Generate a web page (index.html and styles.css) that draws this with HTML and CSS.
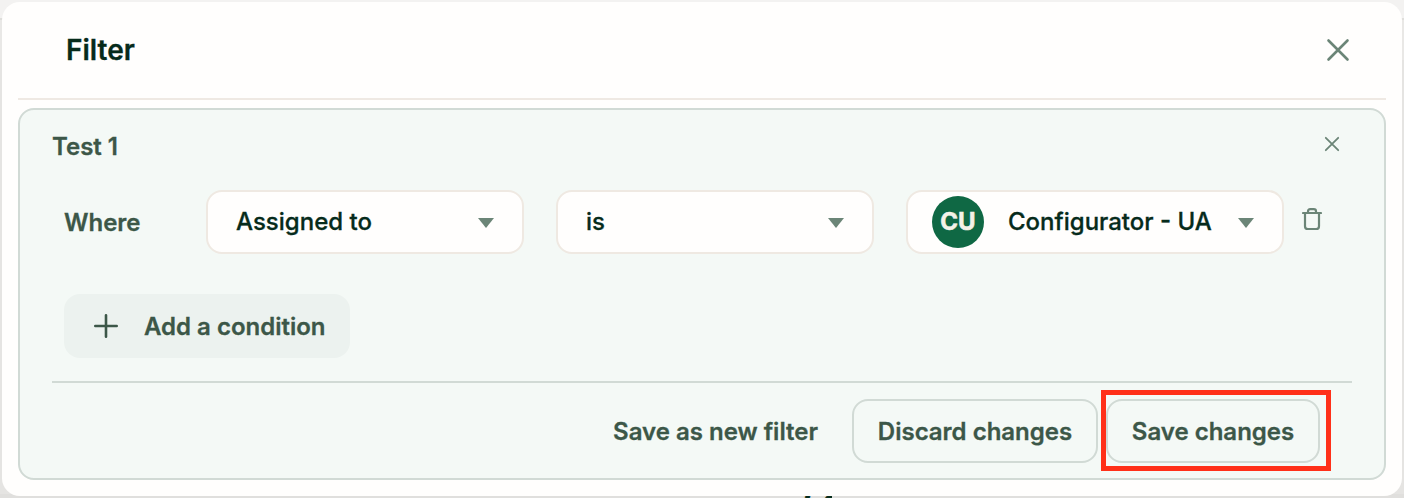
FILE: index.html
```
<!DOCTYPE html>
<html lang="en">
<head>
<meta charset="utf-8">
<title>Filter</title>
<link rel="stylesheet" href="styles.css">
</head>
<body>
<div class="backdrop-heading" aria-hidden="true"><span>l</span><span>f</span></div>
<main class="dialog">
  <header class="dialog-header">
    <h1 class="dialog-title">Filter</h1>
    <svg class="dialog-close" viewBox="0 0 24 24"><path d="M2.5 2.5 21.5 21.5M21.5 2.5 2.5 21.5"/></svg>
  </header>
  <section class="panel">
    <div class="panel-header">
      <h2 class="panel-title">Test 1</h2>
      <svg class="panel-close" viewBox="0 0 16 16"><path d="M1.8 1.8 14.2 14.2M14.2 1.8 1.8 14.2"/></svg>
    </div>
    <div class="condition">
      <span class="where">Where</span>
      <div class="select"><span class="value">Assigned to</span><svg class="caret" viewBox="0 0 16 10"><path d="M0 0H16L8 10Z"/></svg></div>
      <div class="select"><span class="value">is</span><svg class="caret" viewBox="0 0 16 10"><path d="M0 0H16L8 10Z"/></svg></div>
      <div class="select select-user"><span class="avatar">CU</span><span class="value user">Configurator - UA</span><svg class="caret" viewBox="0 0 16 10"><path d="M0 0H16L8 10Z"/></svg></div>
      <svg class="trash" viewBox="0 0 20 24"><path d="M1 6H19M3 6V19.2Q3 22 5.8 22H14.2Q17 22 17 19.2V6M6 6V4.4Q6 2.2 8.2 2.2H11.8Q14 2.2 14 4.4V6"/></svg>
    </div>
    <div class="add">
      <svg class="plus" viewBox="0 0 24 24"><path d="M12 1.3V22.7M1.3 12H22.7"/></svg>
      <span class="label">Add a condition</span>
    </div>
    <footer class="actions">
      <span class="button plain"><span class="label">Save as new filter</span></span>
      <span class="button outlined discard"><span class="label">Discard changes</span></span>
      <span class="button outlined save"><span class="label">Save changes</span><i class="highlight"></i></span>
    </footer>
  </section>
</main>
</body>
</html>
```
FILE: styles.css
```
* { box-sizing: border-box; }
body {
  margin: 0;
  width: 1404px;
  height: 498px;
  padding: 2px;
  overflow: hidden;
  position: relative;
  background: linear-gradient(#f3f2f1 0 18px, #dfdedb 18px 20px, #e9e8e6 20px 60px, #e5e4e2 60px 494px, #e0dfdd 494px);
  font-family: Inter, "Liberation Sans", sans-serif;
  font-size: 24px;
  font-weight: 600;
  color: #3c5748;
  -webkit-text-stroke: 0.3px currentColor;
}
.backdrop-heading {
  position: absolute;
  left: 801px;
  top: 489px;
  display: flex;
  gap: 9px;
  height: 9px;
  overflow: hidden;
  font-size: 32px;
  line-height: 40px;
  font-style: italic;
  font-weight: 700;
  color: #062b1b;
}
.dialog {
  position: relative;
  height: 494px;
  padding: 0 16px;
  border-radius: 18px;
  background: #fffefd;
}
.dialog-header {
  display: flex;
  align-items: center;
  justify-content: space-between;
  height: 98px;
  padding: 0 36px 0 48px;
  border-bottom: 2px solid #efe9e3;
}
h1, h2 { margin: 0; font-weight: 600; }
.dialog-title { font-size: 28px; line-height: 36px; color: #062b1b; }
svg { display: block; flex: none; fill: none; stroke: #6b8577; stroke-width: 2; stroke-linecap: round; stroke-linejoin: round; }
.dialog-close { width: 24px; height: 24px; stroke-width: 2.6; }
.panel {
  display: flex;
  flex-direction: column;
  margin-top: 8px;
  height: 372px;
  padding: 20px 32px 0;
  border: 2px solid #d1dad5;
  border-radius: 16px;
  background: #f4f9f6;
}
.panel-header { display: flex; justify-content: space-between; height: 60px; padding-right: 12px; }
.panel-title { padding-top: 1px; font-size: 24px; line-height: 32px; }
.panel-close { width: 16px; height: 16px; margin-top: 6px; stroke-width: 1.8; }
.condition { display: flex; align-items: center; height: 64px; padding-left: 12px; }
.where { width: 142px; padding-top: 2px; line-height: 32px; }
.select {
  display: flex;
  align-items: center;
  justify-content: space-between;
  width: 318px;
  height: 64px;
  margin-right: 32px;
  padding: 0 28px;
  border: 2px solid #efe9e2;
  border-radius: 16px;
  background: #fffefd;
  font-weight: 500;
  color: #062b1b;
}
.select-user { width: 378px; padding-left: 24px; margin-right: 18px; }
.value { line-height: 32px; white-space: nowrap; }
.caret { width: 16px; height: 10px; margin-top: 2px; fill: #6b8577; stroke: none; }
.avatar {
  flex: none;
  width: 52px;
  height: 52px;
  margin-right: 24px;
  border-radius: 50%;
  background: #0f6844;
  color: #f4f2e8;
  font-weight: 700;
  line-height: 52px;
  text-align: center;
  -webkit-text-stroke: 0.6px currentColor;
}
.user { flex: 1; }
.trash { width: 20px; height: 24px; margin-bottom: 6px; stroke-width: 2.2; }
.add {
  display: flex;
  align-items: center;
  align-self: flex-start;
  width: 286px;
  height: 64px;
  margin: 40px 0 23px 12px;
  padding-left: 30px;
  border-radius: 16px;
  background: #ecf2ef;
}
.plus { width: 24px; height: 24px; margin-right: 26px; stroke: #3c5748; stroke-width: 2.6; }
.label { padding-top: 2px; line-height: 32px; white-space: nowrap; }
.actions {
  display: flex;
  justify-content: flex-end;
  gap: 8px;
  padding: 16px 32px 0 0;
  border-top: 2px solid #d1dad5;
}
.button { display: flex; align-items: center; justify-content: center; height: 64px; border-radius: 16px; }
.plain { margin-right: 26px; }
.outlined { border: 2px solid #d1dad5; }
.discard { width: 246px; }
.save { position: relative; width: 214px; }
.highlight { position: absolute; inset: -11px -13px -10px -7px; border: 5px solid #ff3019; }
```
